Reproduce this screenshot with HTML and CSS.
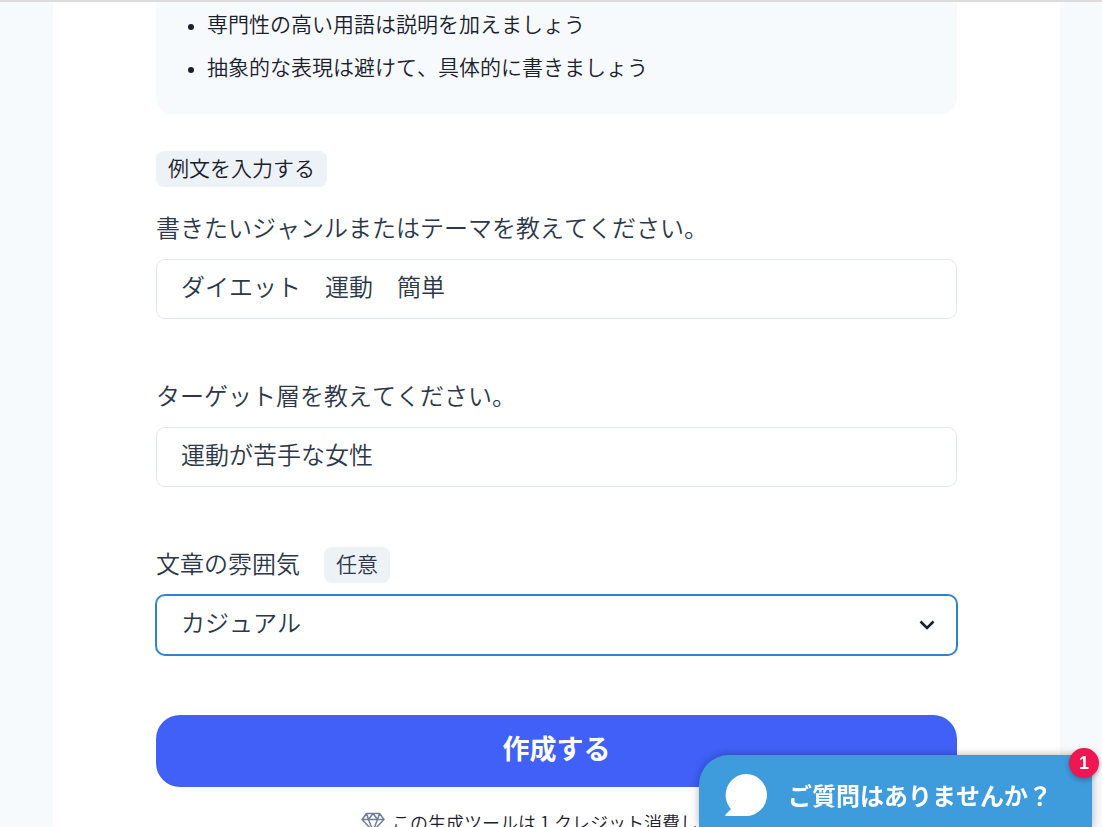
FILE: index.html
```html
<!DOCTYPE html>
<html lang="ja">
<head>
  <meta charset="UTF-8">
  <meta name="viewport" content="width=device-width, initial-scale=1.0">
  <title>文章生成ツール</title>
  <link rel="stylesheet" href="styles.css">
</head>
<body>
  <main class="card">
    <ul class="tips">
      <li>専門性の高い用語は説明を加えましょう</li>
      <li>抽象的な表現は避けて、具体的に書きましょう</li>
    </ul>

    <form class="form">
      <button type="button" class="tag example-btn">例文を入力する</button>

      <div class="field">
        <label for="theme">書きたいジャンルまたはテーマを教えてください。</label>
        <input type="text" id="theme" class="control" value="ダイエット　運動　簡単">
      </div>

      <div class="field">
        <label for="target">ターゲット層を教えてください。</label>
        <input type="text" id="target" class="control" value="運動が苦手な女性">
      </div>

      <div class="field">
        <div class="label-row">
          <label for="mood">文章の雰囲気</label>
          <span class="tag">任意</span>
        </div>
        <div class="select-wrap">
          <select id="mood" class="control active">
            <option>カジュアル</option>
          </select>
          <svg class="chevron" viewBox="0 0 16 10" aria-hidden="true"><path d="M1.5 1.5 8 8l6.5-6.5"/></svg>
        </div>
      </div>

      <button type="submit" class="submit">作成する</button>

      <p class="note">
        <svg class="gem" viewBox="0 0 24 20" aria-hidden="true">
          <path d="M5.5 1.5h13L23 7.5 12 19 1 7.5zM1 7.5h22M5.5 1.5l2 6L12 19l4.500-11.500 2-6M7.500 7.500 12 1.500l4.500 6"/>
        </svg>
        この生成ツールは 1 クレジット消費します。
      </p>
    </form>
  </main>

  <button type="button" class="chat">
    <svg class="bubble" viewBox="0 0 42 42" aria-hidden="true">
      <path d="M21 0a21 21 0 1 1 0 42H1c-1 0-1-1 0-2l5-5A21 21 0 0 1 21 0z"/>
    </svg>
    <span>ご質問はありませんか？</span>
    <span class="count">1</span>
  </button>
</body>
</html>
```

FILE: styles.css
```css
* {
  box-sizing: border-box;
  margin: 0;
  padding: 0;
}

body {
  height: 100vh;
  overflow: hidden;
  padding: 0 42px 0 53px;
  background: #f7fafc;
  border-top: 2px solid #dcdcdc;
  color: #1a202c;
  font-family: "Noto Sans CJK JP", sans-serif;
  font-weight: 350;
  font-size: 24px;
  font-kerning: none;
  line-height: 36px;
}

button,
input,
select {
  font: inherit;
  font-kerning: none;
  color: inherit;
  border: none;
}

.card {
  background: #fff;
  padding: 0 103px;
}

.tips {
  padding: 5px 24px 32px 51px;
  background: #f7fafc;
  border-radius: 0 0 16px 16px;
  font-size: 21px;
  line-height: 32px;
  list-style: none;
}

.tips li {
  position: relative;
}

.tips li + li {
  margin-top: 11px;
}

.tips li::before {
  content: "";
  position: absolute;
  left: -19px;
  top: 17px;
  width: 6px;
  height: 6px;
  border-radius: 50%;
  background: #1a202c;
}

.form {
  padding-top: 37px;
}

.tag {
  display: inline-block;
  height: 36px;
  padding: 0 12px;
  background: #edf2f7;
  border-radius: 8px;
  font-size: 21px;
  line-height: 32px;
}

.example-btn {
  display: block;
  padding-bottom: 4px;
  margin-bottom: 24px;
}

.field {
  margin-bottom: 60px;
  color: #2d3748;
}

.field label {
  display: block;
  height: 36px;
  line-height: 32px;
}

.label-row {
  display: flex;
  align-items: center;
  gap: 24px;
}

.control {
  display: block;
  width: 100%;
  height: 60px;
  margin-top: 12px;
  padding: 0 24px 8px;
  background: #fff;
  border: 1px solid #e2e8f0;
  border-radius: 9px;
}

.control.active {
  appearance: none;
  padding-bottom: 6px;
  border-color: #3182ce;
  box-shadow: 0 0 0 1px #3182ce;
}

.select-wrap {
  position: relative;
}

/* custom arrow over the select */
.chevron {
  position: absolute;
  right: 22px;
  top: 25px;
  width: 16px;
  height: 10px;
  fill: none;
  stroke: #1a202c;
  stroke-width: 2.5;
  pointer-events: none;
}

.submit {
  display: block;
  width: 100%;
  height: 72px;
  padding-bottom: 6px;
  background: #4060f8;
  border-radius: 24px;
  color: #fff;
  font-size: 27px;
  font-weight: 700;
}

.note {
  display: flex;
  align-items: center;
  justify-content: center;
  gap: 7px;
  margin-top: 20px;
  font-size: 18px;
  line-height: 30px;
  white-space: nowrap;
}

.gem {
  width: 24px;
  height: 20px;
  fill: none;
  stroke: #718096;
  stroke-width: 1.5;
  stroke-linejoin: round;
}

.chat {
  position: fixed;
  right: 10px;
  bottom: 0;
  display: flex;
  align-items: center;
  gap: 21px;
  height: 72px;
  padding: 8px 40px 0 26px;
  background: #3e9bdc;
  border-radius: 30px 9px 0 0;
  box-shadow: 0 0 9px rgba(0, 0, 0, 0.3);
  color: #fff;
  font-weight: 700;
  white-space: nowrap;
}

.bubble {
  width: 42px;
  height: 42px;
  fill: #fff;
}

.count {
  position: absolute;
  top: -7px;
  right: -7px;
  width: 30px;
  height: 30px;
  border-radius: 50%;
  background: #f01651;
  box-shadow: 0 2px 5px rgba(0, 0, 0, 0.3);
  font-family: "Liberation Sans", sans-serif;
  font-size: 18px;
  line-height: 30px;
  text-align: center;
}
```
